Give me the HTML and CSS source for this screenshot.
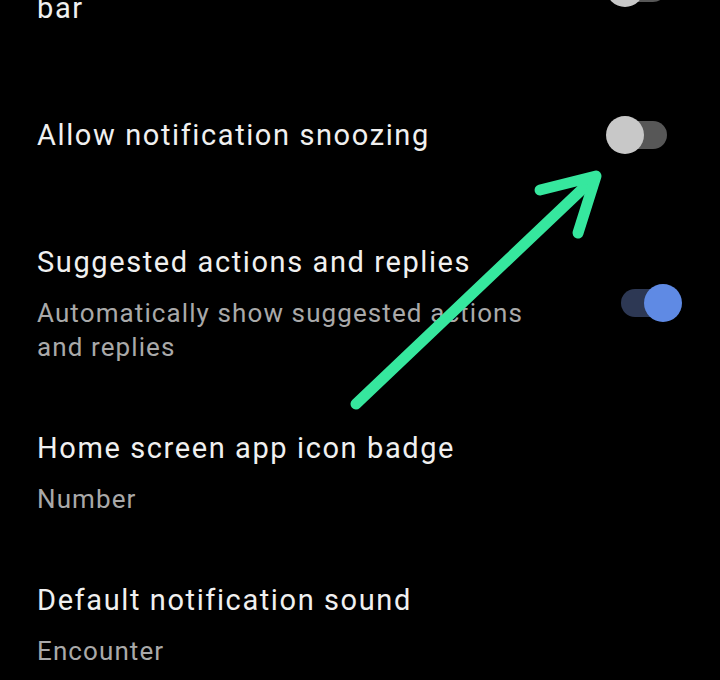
FILE: index.html
```html
<!DOCTYPE html>
<html>
<head>
<link rel="stylesheet" href="styles.css">
<meta charset="UTF-8">
<title>Notifications</title>
</head>
<body>
<div class="screen">
<ul class="prefs">
	<li class="pref">
		<div class="pref_text">
			<div class="pref_title">Show icons in status<br>bar</div>
		</div>
		<span class="switch"></span>
	</li>
	<li class="pref pref_single">
		<div class="pref_text">
			<div class="pref_title">Allow notification snoozing</div>
		</div>
		<span class="switch"></span>
	</li>
	<li class="pref">
		<div class="pref_text">
			<div class="pref_title">Suggested actions and replies</div>
			<div class="pref_sub">Automatically show suggested actions and replies</div>
		</div>
		<span class="switch on"></span>
	</li>
	<li class="pref">
		<div class="pref_text">
			<div class="pref_title">Home screen app icon badge</div>
			<div class="pref_sub">Number</div>
		</div>
	</li>
	<li class="pref">
		<div class="pref_text">
			<div class="pref_title">Default notification sound</div>
			<div class="pref_sub">Encounter</div>
		</div>
	</li>
</ul>
<!-- hand drawn pointer on top of the screenshot -->
<svg class="arrow" width="720" height="680" viewBox="0 0 720 680">
	<g fill="none" stroke="#36e79e" stroke-width="11" stroke-linecap="round" stroke-linejoin="round">
		<path d="M356 404 L594 178"/>
		<path d="M540 190 L596 176 L578 233"/>
	</g>
</svg>
</div>
</body>
</html>
```
FILE: styles.css
```css
html, body {
	margin: 0;
	padding: 0;
	background: #000;
}
.screen {
	position: relative;
	width: 720px;
	height: 680px;
	overflow: hidden;
	font-family: Roboto, "Noto Sans", "Liberation Sans", sans-serif;
}
.prefs {
	list-style: none;
	margin: -84px 0 0 0;
	padding: 0;
}
.pref {
	display: flex;
	align-items: center;
	gap: 46px;
	padding: 32px 38px 32px 37px;
}
.pref_single {
	min-height: 86px;
}
.pref_text {
	flex: 1;
	min-width: 0;
}
.pref_title {
	color: #f0f0f0;
	font-size: 29px;
	line-height: 40px;
	letter-spacing: 1.6px;
}
.pref_sub {
	color: #a9a9a9;
	font-size: 26px;
	line-height: 34px;
	letter-spacing: 1.1px;
	margin-top: 14px;
}
.switch {
	position: relative;
	flex: none;
	width: 76px;
	height: 40px;
}
.switch::before {
	content: "";
	position: absolute;
	left: 15px;
	top: 6px;
	width: 46px;
	height: 28px;
	border-radius: 14px;
	background: #575757;
}
.switch::after {
	content: "";
	position: absolute;
	left: 0;
	top: 1px;
	width: 38px;
	height: 38px;
	border-radius: 50%;
	background: #c8c8c8;
}
.switch.on::before {
	background: #2d3854;
}
.switch.on::after {
	left: 38px;
	background: #5f8ae4;
}
.arrow {
	position: absolute;
	left: 0;
	top: 0;
	pointer-events: none;
}
```
